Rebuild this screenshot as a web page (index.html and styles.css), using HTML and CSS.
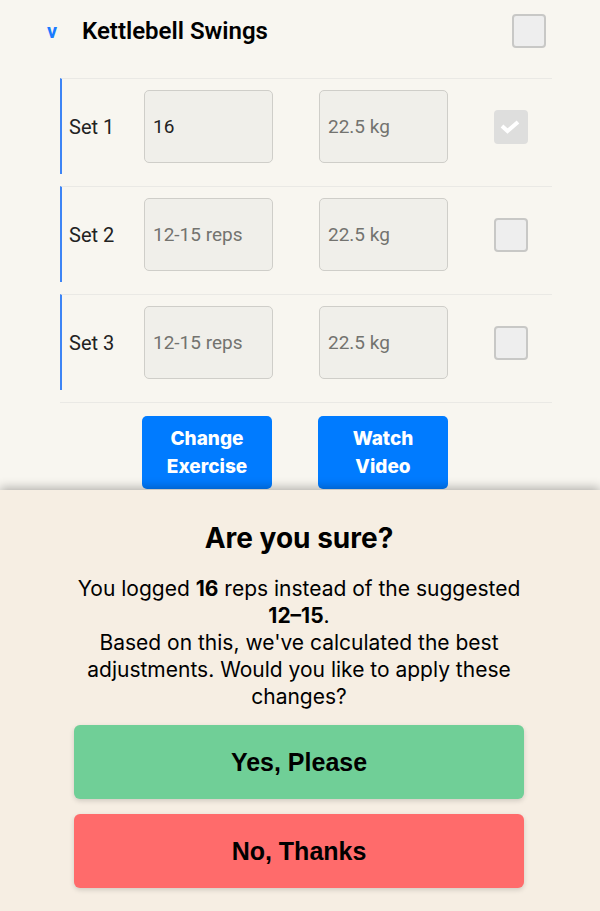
FILE: index.html
```html
<!DOCTYPE html>
<html lang="en">
<head>
<meta charset="utf-8">
<meta name="viewport" content="width=device-width, initial-scale=1">
<title>Kettlebell Swings</title>
<link rel="stylesheet" href="styles.css">
</head>
<body>
<main class="exercise">
  <header class="exercise-header">
    <button class="toggle" type="button" aria-label="Collapse exercise" aria-expanded="true">v</button>
    <h1 class="exercise-name">Kettlebell Swings</h1>
    <input class="check" type="checkbox" aria-label="Complete Kettlebell Swings">
  </header>
  <ul class="sets">
    <li class="set">
      <div class="set-row">
        <label class="set-label" for="reps-1">Set 1</label>
        <input class="field" id="reps-1" type="text" value="16">
        <input class="field" type="text" placeholder="22.5 kg" aria-label="Set 1 weight">
        <span class="check-wrap">
          <input class="check" type="checkbox" checked disabled aria-label="Set 1 done">
          <svg class="tick" viewBox="0 0 34 34" aria-hidden="true"><path d="M8 16 13.500 21 24 12"/></svg>
        </span>
      </div>
    </li>
    <li class="set">
      <div class="set-row">
        <label class="set-label" for="reps-2">Set 2</label>
        <input class="field" id="reps-2" type="text" placeholder="12-15 reps">
        <input class="field" type="text" placeholder="22.5 kg" aria-label="Set 2 weight">
        <input class="check" type="checkbox" aria-label="Set 2 done">
      </div>
    </li>
    <li class="set">
      <div class="set-row">
        <label class="set-label" for="reps-3">Set 3</label>
        <input class="field" id="reps-3" type="text" placeholder="12-15 reps">
        <input class="field" type="text" placeholder="22.5 kg" aria-label="Set 3 weight">
        <input class="check" type="checkbox" aria-label="Set 3 done">
      </div>
    </li>
  </ul>
  <div class="actions">
    <button class="action" type="button">Change Exercise</button>
    <button class="action" type="button">Watch Video</button>
  </div>
</main>
<section class="sheet" role="dialog" aria-labelledby="sheet-title">
  <h2 class="sheet-title" id="sheet-title">Are you sure?</h2>
  <p class="sheet-text">You logged <strong>16</strong> reps instead of the suggested <strong>12–15</strong>.<br>Based on this, we've calculated the best adjustments. Would you like to apply these changes?</p>
  <div class="choices">
    <button class="choice yes" type="button">Yes, Please</button>
    <button class="choice no" type="button">No, Thanks</button>
  </div>
</section>
</body>
</html>
```
FILE: styles.css
```css
* {
  box-sizing: border-box;
}

body {
  margin: 0;
  min-height: 100vh;
  display: flex;
  flex-direction: column;
  background: #f8f6f0;
  color: #000;
  font-family: Roboto, "Liberation Sans", sans-serif;
}

h1, h2, p, ul {
  margin: 0;
  padding: 0;
}

button, input {
  font: inherit;
}

.exercise-header {
  display: flex;
  align-items: center;
  padding: 14px 54px 30px 44px;
}

.toggle {
  width: 16px;
  margin-right: 22px;
  padding: 0;
  border: 0;
  background: none;
  color: #1a7bff;
  font-size: 20px;
  font-weight: 700;
}

.exercise-name {
  flex: 1;
  font-size: 24px;
  line-height: 28px;
  font-weight: 600;
}

.check {
  appearance: none;
  display: block;
  width: 34px;
  height: 34px;
  margin: 0;
  border: 2px solid #c8c8c6;
  border-radius: 4px;
  background: #eeeeee;
}

.check:checked {
  border-color: #dededd;
  background: #dededd;
}

.check-wrap {
  display: grid;
}

.check-wrap > * {
  grid-area: 1 / 1;
}

.tick {
  width: 34px;
  height: 34px;
  fill: none;
  stroke: #fff;
  stroke-width: 4;
}

.sets {
  margin: 0 48px 0 60px;
  list-style: none;
  border-bottom: 1px solid #eae9e5;
}

.set {
  padding-bottom: 12px;
}

.set-row {
  display: grid;
  grid-template-columns: 75px 1fr 1fr 34px;
  align-items: center;
  padding: 11px 24px 11px 7px;
  border-top: 1px solid #eae9e5;
  border-left: 2px solid #3d84f5;
}

.set-label {
  color: #222;
  font-size: 20px;
}

.field {
  min-width: 0;
  height: 73px;
  margin-right: 46px;
  padding: 0 8px;
  border: 1px solid #cfcec9;
  border-radius: 5px;
  background: #f0efea;
  color: #222;
  font-size: 19px;
}

.field::placeholder {
  color: #73736f;
  opacity: 1;
}

.actions {
  display: grid;
  grid-template-columns: 1fr 1fr;
  gap: 46px;
  padding: 13px 152px 1px 142px;
}

.action {
  height: 73px;
  padding: 0 16px;
  border: 0;
  border-radius: 5px;
  background: #007bff;
  color: #fff;
  font-family: Inter, sans-serif;
  font-size: 19px;
  line-height: 28px;
  font-weight: 800;
}

.sheet {
  flex: 1;
  padding: 28px 76px 23px 74px;
  background: #f6eee3;
  box-shadow: 0 -2px 10px rgba(0, 0, 0, 0.3);
  font-family: Inter, sans-serif;
  text-align: center;
}

.sheet-title {
  margin-bottom: 17px;
  font-size: 28px;
  line-height: 40px;
  font-weight: 700;
}

.sheet-text {
  margin-bottom: 15px;
  font-size: 21px;
  line-height: 27px;
}

.choices {
  display: grid;
  gap: 15px;
}

.choice {
  height: 74px;
  border: 0;
  border-radius: 6px;
  box-shadow: 0 2px 5px rgba(0, 0, 0, 0.15);
  color: #000;
  font-family: "Liberation Sans", sans-serif;
  font-size: 25px;
  font-weight: 700;
}

.yes {
  background: #70cf97;
}

.no {
  background: #ff6b6b;
}
```
